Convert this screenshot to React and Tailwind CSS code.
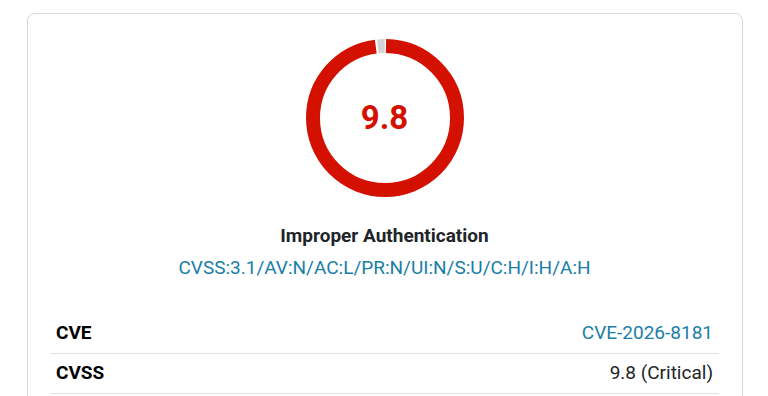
import React from "react";

const RED = "#d41100";

const ScoreRing = ({ score }) => {
  const size = 158;
  const stroke = 14;
  const r = (size - stroke) / 2;
  const c = 2 * Math.PI * r;
  const gap = 2;
  const redLen = (score / 10) * c - gap;
  const grayLen = c - (score / 10) * c - gap;

  return (
    <div className="relative w-[158px] h-[158px]">
      <svg width={size} height={size} className="-rotate-90">
        <circle
          cx={size / 2}
          cy={size / 2}
          r={r}
          fill="none"
          stroke={RED}
          strokeWidth={stroke}
          strokeDasharray={`${redLen} ${c - redLen}`}
          strokeDashoffset={-gap / 2}
        />
        <circle
          cx={size / 2}
          cy={size / 2}
          r={r}
          fill="none"
          stroke="#d4d4d4"
          strokeWidth={stroke}
          strokeDasharray={`${grayLen} ${c - grayLen}`}
          strokeDashoffset={-((score / 10) * c + gap / 2)}
        />
      </svg>
      <div className="absolute inset-0 flex items-center justify-center">
        <span className="text-[33px] font-bold text-[#d41100]">{score}</span>
      </div>
    </div>
  );
};

export default function App() {
  const rows = [
    { label: "CVE", value: "CVE-2026-8181", link: true },
    { label: "CVSS", value: "9.8 (Critical)", link: false },
  ];

  return (
    <div
      className="min-h-screen bg-white pt-[13px] pl-[27px] pr-[25px] text-[#212529]"
      style={{ fontFamily: "Roboto, 'Liberation Sans', sans-serif" }}
    >
      <div className="border border-[#d9d9d9] rounded-lg pt-[25px] pl-[22px] pr-[23px] pb-6">
        <div className="flex flex-col items-center">
          <ScoreRing score={9.8} />
          <div className="mt-[25px] text-[19px] leading-7 font-bold text-[#212529]">
            Improper Authentication
          </div>
          <a className="mt-1 text-[19px] leading-7 text-[#1a7ea6]">
            CVSS:3.1/AV:N/AC:L/PR:N/UI:N/S:U/C:H/I:H/A:H
          </a>
        </div>
        <div className="mt-[32px]">
          {rows.map((row) => (
            <div
              key={row.label}
              className="flex justify-between items-center h-[40px] px-[6px] border-b border-[#dee2e6] text-[19px]"
            >
              <span className="font-bold text-black">{row.label}</span>
              <span className={row.link ? "text-[#1a7ea6]" : "text-[#212529]"}>
                {row.value}
              </span>
            </div>
          ))}
        </div>
      </div>
    </div>
  );
}
